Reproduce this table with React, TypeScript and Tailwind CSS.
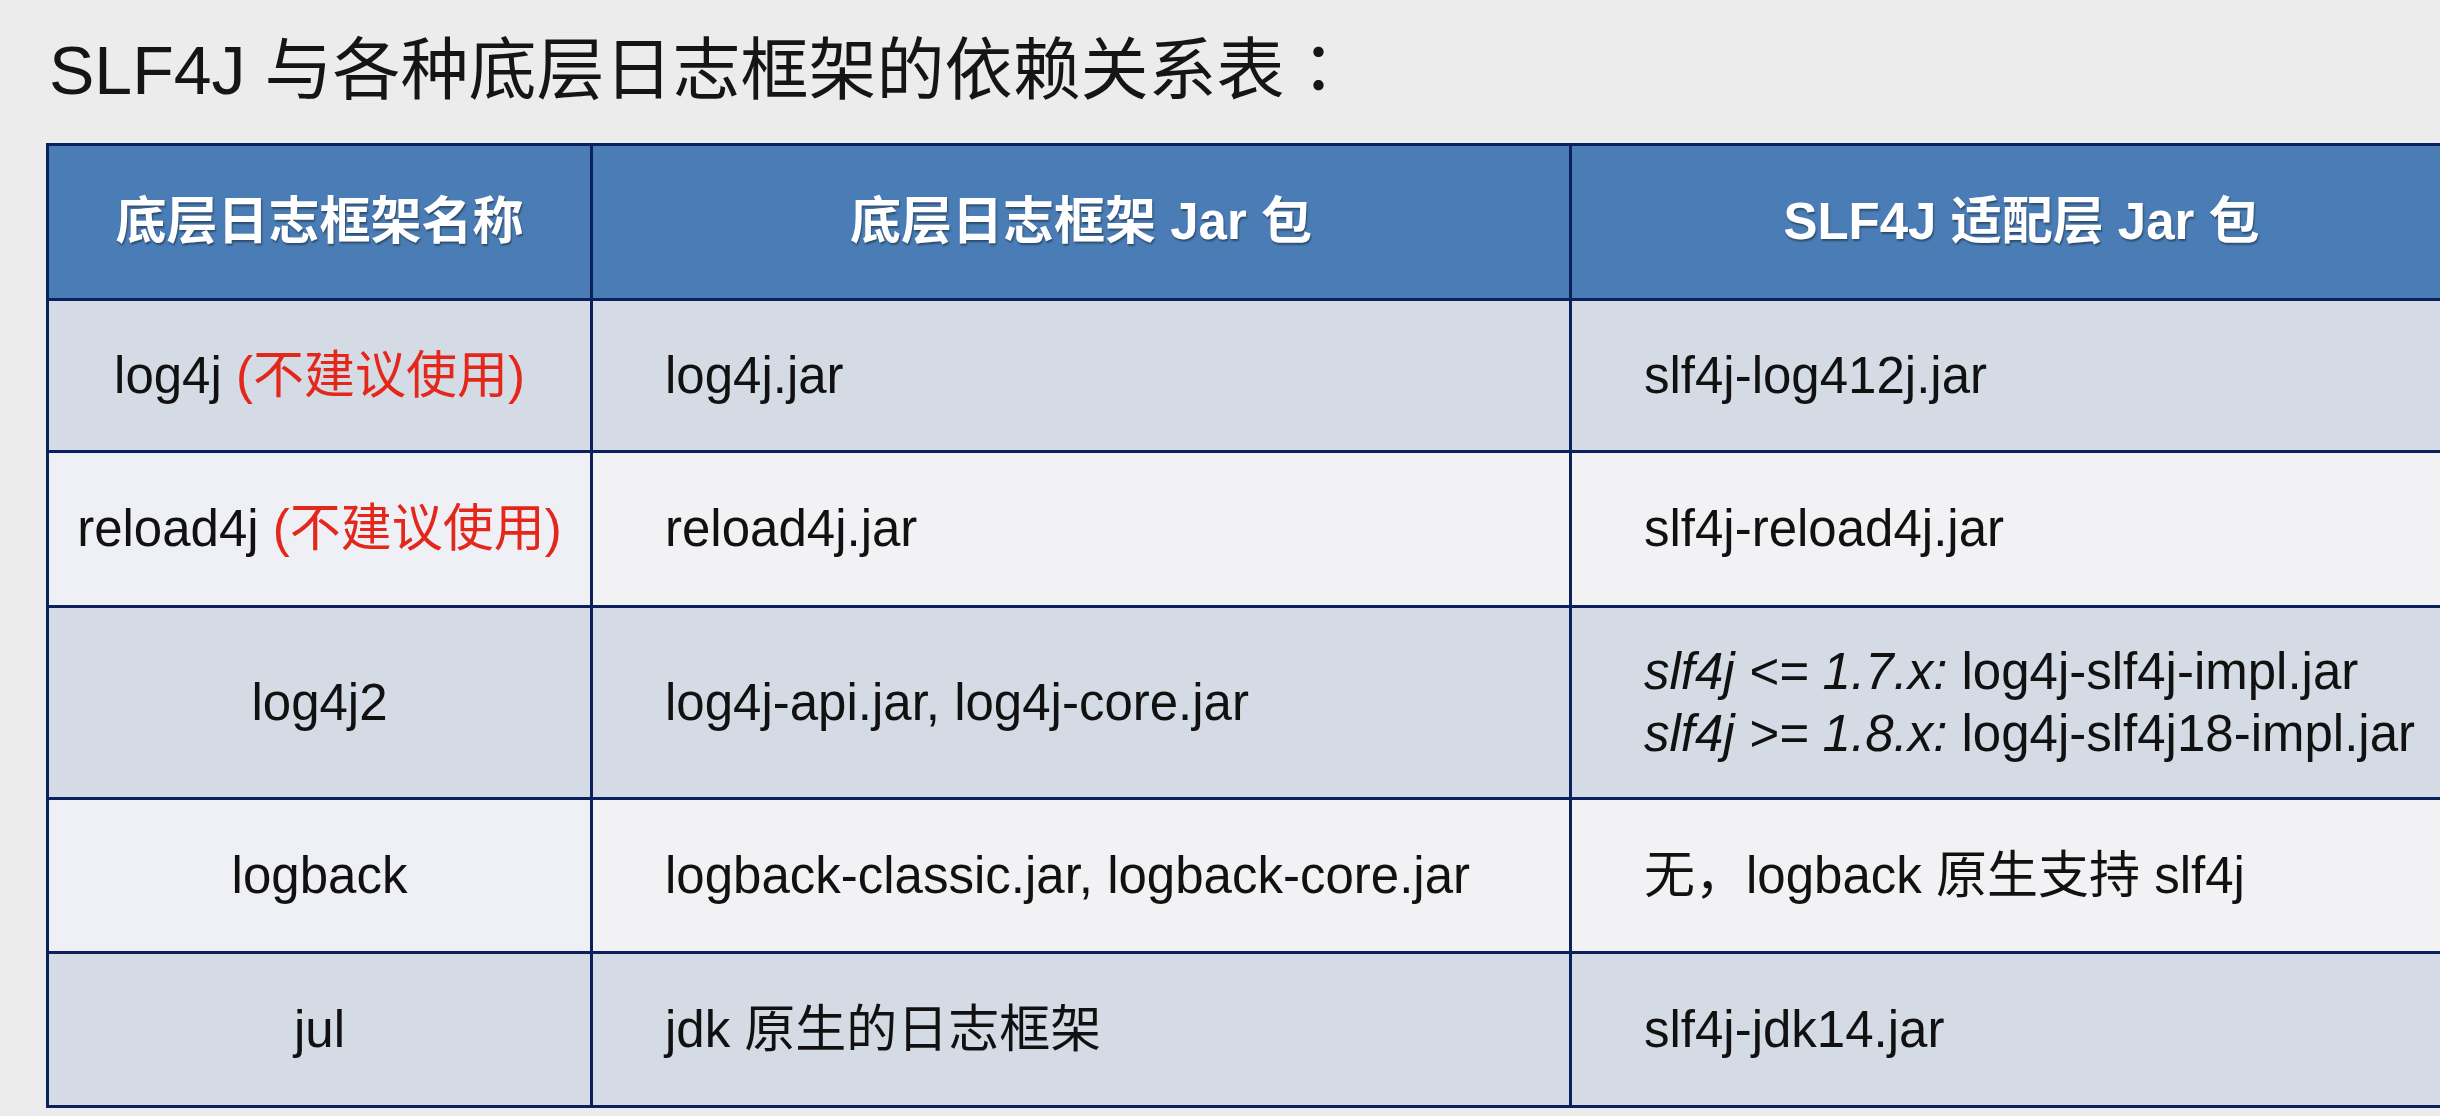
const rows = [
  {
    name: (
      <>
        log4j <span className="text-[#e4271b]">(不建议使用)</span>
      </>
    ),
    jar: "log4j.jar",
    adapter: <>slf4j-log412j.jar</>,
    h: "h-[152px]",
  },
  {
    name: (
      <>
        reload4j <span className="text-[#e4271b]">(不建议使用)</span>
      </>
    ),
    jar: "reload4j.jar",
    adapter: <>slf4j-reload4j.jar</>,
    h: "h-[155px]",
  },
  {
    name: <>log4j2</>,
    jar: "log4j-api.jar, log4j-core.jar",
    adapter: (
      <>
        <div>
          <i>slf4j &lt;= 1.7.x:</i> log4j-slf4j-impl.jar
        </div>
        <div>
          <i>slf4j &gt;= 1.8.x:</i> log4j-slf4j18-impl.jar
        </div>
      </>
    ),
    h: "h-[192px]",
  },
  {
    name: <>logback</>,
    jar: "logback-classic.jar, logback-core.jar",
    adapter: <>无，logback 原生支持 slf4j</>,
    h: "h-[154px]",
  },
  {
    name: <>jul</>,
    jar: "jdk 原生的日志框架",
    adapter: <>slf4j-jdk14.jar</>,
    h: "h-[154px]",
  },
];

export default function App() {
  return (
    <div className="w-[2440px] h-[1116px] overflow-hidden bg-[#ececec] text-[#111] font-['Liberation_Sans','Noto_Sans_CJK_SC',sans-serif]">
      <h1 className="h-[106px] pt-[24px] pl-[49px] text-[68px] leading-[82px] font-normal text-[#151515]">
        SLF4J 与各种底层日志框架的依赖关系表
        <span className="font-['Noto_Sans_CJK_TC',sans-serif]">：</span>
      </h1>

      <div className="pl-[46px] pt-[37px]">
        <table className="table-fixed border-collapse w-[2425px] text-[51px] leading-[1.2]">
          <colgroup>
            <col className="w-[544px]" />
            <col className="w-[979px]" />
            <col className="w-[902px]" />
          </colgroup>
          <thead>
            <tr className="h-[155px] bg-[#4a7db6] text-white font-bold [text-shadow:1px_2px_2px_rgba(0,0,0,0.4)]">
              <th className="border-[3px] border-[#0b215e] text-center">底层日志框架名称</th>
              <th className="border-[3px] border-[#0b215e] text-center">底层日志框架 Jar 包</th>
              <th className="border-[3px] border-[#0b215e] text-center">SLF4J 适配层 Jar 包</th>
            </tr>
          </thead>
          <tbody>
            {rows.map((r, i) => {
              const odd = i % 2 === 0;
              return (
                <tr key={i} className={r.h}>
                  <td
                    className={`border-[3px] border-[#0b215e] text-center ${
                      odd ? "bg-[#d5dbe5]" : "bg-[#eef0f6]"
                    }`}
                  >
                    {r.name}
                  </td>
                  <td
                    className={`border-[3px] border-[#0b215e] pl-[72px] ${
                      odd ? "bg-[#d5dbe5]" : "bg-[#f2f2f4]"
                    }`}
                  >
                    {r.jar}
                  </td>
                  <td
                    className={`border-[3px] border-[#0b215e] pl-[72px] ${
                      odd ? "bg-[#d5dbe5]" : "bg-[#f2f2f4]"
                    }`}
                  >
                    {r.adapter}
                  </td>
                </tr>
              );
            })}
          </tbody>
        </table>
      </div>
    </div>
  );
}
